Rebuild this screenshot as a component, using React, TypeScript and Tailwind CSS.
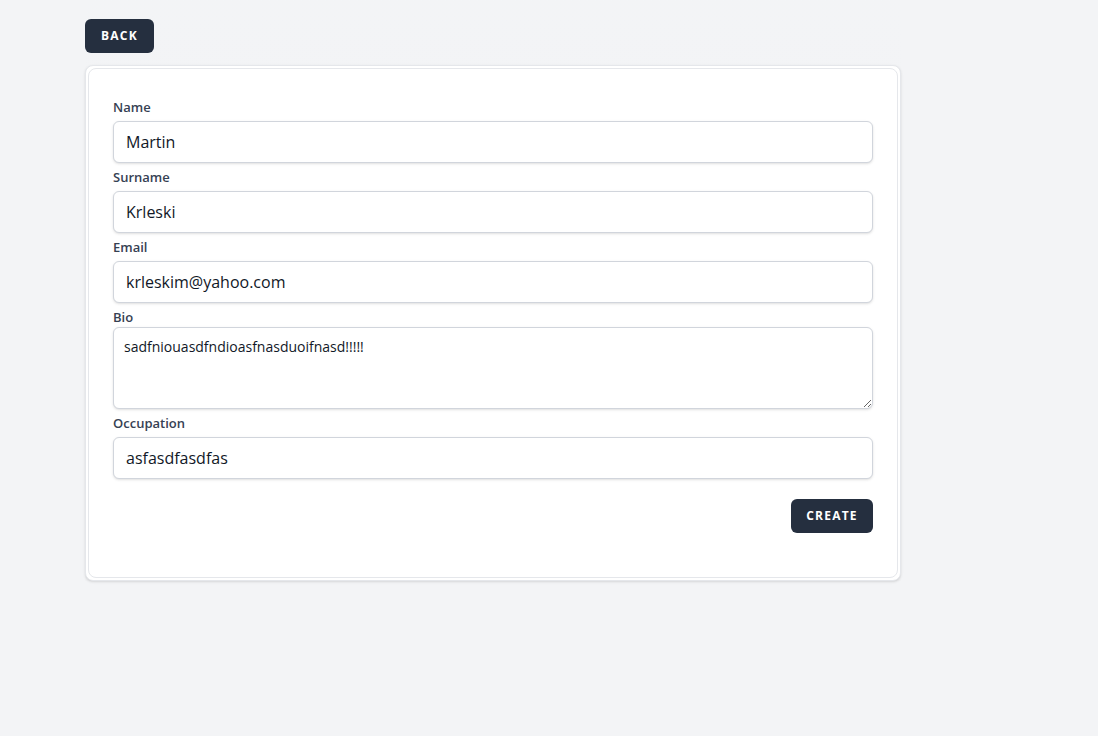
import React, { useState } from 'react';

const font = { fontFamily: '"Open Sans", "Noto Sans", sans-serif' };

function Field({ label, value, onChange }: { label: string; value: string; onChange: (v: string) => void }) {
  return (
    <div>
      <label className="block text-[13px] font-semibold text-gray-700 leading-5 my-1">{label}</label>
      <input
        value={value}
        onChange={(e) => onChange(e.target.value)}
        className="block w-full h-[42px] rounded-md border border-gray-300 bg-white px-3 text-base text-[#111827] shadow-sm outline-none"
        style={font}
      />
    </div>
  );
}

export default function App() {
  const [name, setName] = useState('Martin');
  const [surname, setSurname] = useState('Krleski');
  const [email, setEmail] = useState('krleskim@yahoo.com');
  const [bio, setBio] = useState('sadfniouasdfndioasfnasduoifnasd!!!!!');
  const [occupation, setOccupation] = useState('asfasdfasdfas');

  return (
    <div className="min-h-screen bg-gray-100" style={font}>
      <div className="ml-[85px] w-[816px] pt-[19px] rounded-t-lg bg-gradient-to-b from-gray-100 to-[#f1f2f4]">
        <button className="h-[34px] w-[69px] rounded-md bg-[#252f3f] text-xs font-bold uppercase tracking-widest text-white">
          Back
        </button>
        <div className="mt-[12px] rounded-lg border border-gray-200 bg-white p-[2px] shadow-sm">
          <div className="rounded-lg border border-gray-200 px-6 pt-6 pb-[44px]">
            <Field label="Name" value={name} onChange={setName} />
            <Field label="Surname" value={surname} onChange={setSurname} />
            <Field label="Email" value={email} onChange={setEmail} />
            <div>
              <label className="block text-[13px] font-semibold text-gray-700 leading-5 mt-1">Bio</label>
              <textarea
                value={bio}
                onChange={(e) => setBio(e.target.value)}
                className="block w-full h-[82px] rounded-md border border-gray-300 bg-white px-[10px] py-[9px] text-sm text-[#111827] shadow-sm outline-none"
                style={font}
              />
            </div>
            <Field label="Occupation" value={occupation} onChange={setOccupation} />
            <div className="mt-5 flex justify-end">
              <button className="h-[34px] w-[82px] rounded-md bg-[#252f3f] text-xs font-bold uppercase tracking-widest text-white">
                Create
              </button>
            </div>
          </div>
        </div>
      </div>
    </div>
  );
}
